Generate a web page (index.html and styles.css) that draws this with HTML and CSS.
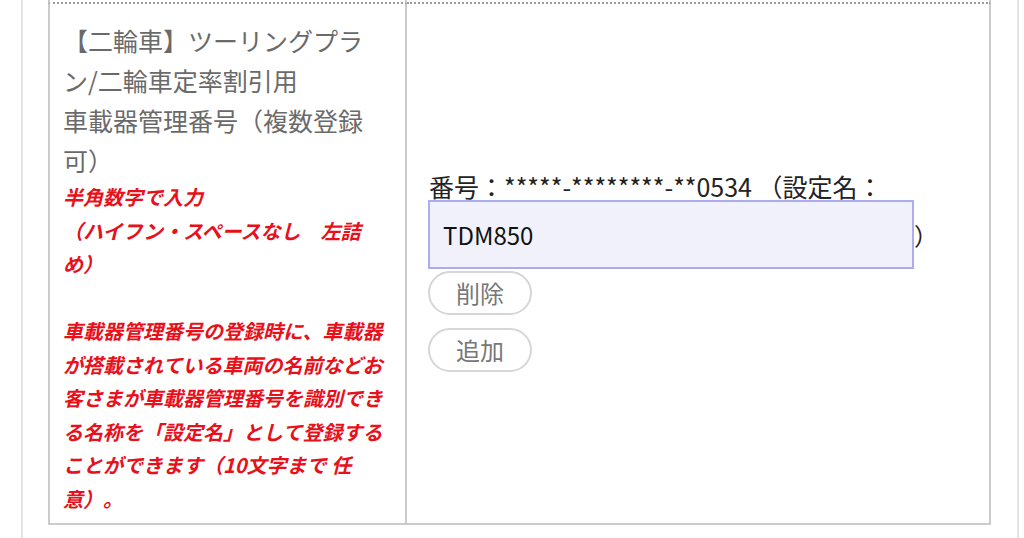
FILE: index.html
```html
<!DOCTYPE html>
<html lang="ja">
<head>
<meta charset="utf-8">
<title>車載器管理番号</title>
<link rel="stylesheet" href="styles.css">
</head>
<body>
<div class="page">
  <div class="form">
    <div class="cell head prev"></div>
    <div class="cell body prev"></div>
    <div class="cell head">
      <p class="label">【二輪車】ツーリングプラン/二輪車定率割引用<br>車載器管理番号（複数登録可）</p>
      <p class="note">半角数字で入力<br>（ハイフン・スペースなし　左詰め）<br><br>車載器管理番号の登録時に、車載器が搭載されている車両の名前などお客さまが車載器管理番号を識別できる名称を「設定名」として登録することができます（10文字まで 任意）。</p>
    </div>
    <div class="cell body">
      <div class="entry">
        <p class="num">番号：*****-********-**0534 （設定名：</p>
        <div class="name-row"><input class="name" type="text" value="TDM850"><span class="close">）</span></div>
        <button class="pill" type="button">削除</button>
        <button class="pill add" type="button">追加</button>
      </div>
    </div>
  </div>
</div>
</body>
</html>
```
FILE: styles.css
```css
html, body {
  margin: 0;
  padding: 0;
  background: #fff;
  overflow: hidden;
}
body {
  font-family: "Noto Sans CJK JP", "Noto Sans", sans-serif;
  text-spacing-trim: space-all;
}
.page {
  margin-left: 21px;
  width: 994px;
  height: 538px;
  border-left: 2px solid #e4e4e4;
  border-right: 2px solid #e4e4e4;
}
.form {
  margin-left: 25px;
  width: 943px;
  display: grid;
  grid-template-columns: 359px 584px;
}
.cell {
  box-sizing: border-box;
}
.head {
  border-left: 2px solid #cbcbcb;
  border-right: 2px solid #cbcbcb;
  border-bottom: 2px solid #cbcbcb;
  padding: 16px 20px 8px 13px;
}
.body {
  border-right: 2px solid #cbcbcb;
  border-bottom: 2px solid #cbcbcb;
  padding: 17px 10px 0 22px;
  display: flex;
  flex-direction: column;
  justify-content: center;
}
.prev {
  height: 4px;
  padding: 0;
  border-bottom: 2px dotted #9c9c9c;
}
.label {
  margin: 0;
  font-size: 25px;
  line-height: 40px;
  color: #6a6a6a;
}
.note {
  margin: 0;
  font-size: 20px;
  line-height: 33.5px;
  font-weight: bold;
  font-style: italic;
  color: #e8101a;
}
.entry {
  color: #222;
}
.num {
  margin: 0;
  font-size: 25px;
  line-height: 28px;
  white-space: nowrap;
}
.name-row {
  display: flex;
  align-items: center;
}
.name {
  box-sizing: border-box;
  width: 486px;
  height: 69px;
  margin: 0 0 0 -1px;
  padding: 0 13px;
  border: 2px solid #acacf0;
  border-radius: 0;
  background: #f1f1fc;
  color: #111;
  font-family: "Noto Sans CJK JP", "Noto Sans", sans-serif;
  font-size: 24px;
  outline: none;
}
.close {
  font-size: 24px;
  line-height: 28px;
}
.pill {
  display: block;
  box-sizing: border-box;
  width: 104px;
  height: 44px;
  margin: 2px 0 0 -1px;
  padding: 0;
  border: 2px solid #d6d6d6;
  border-radius: 22px;
  background: #fff;
  color: #777;
  font-family: "Noto Sans CJK JP", "Noto Sans", sans-serif;
  font-size: 24px;
  line-height: 40px;
}
.add {
  margin-top: 13px;
}
```
